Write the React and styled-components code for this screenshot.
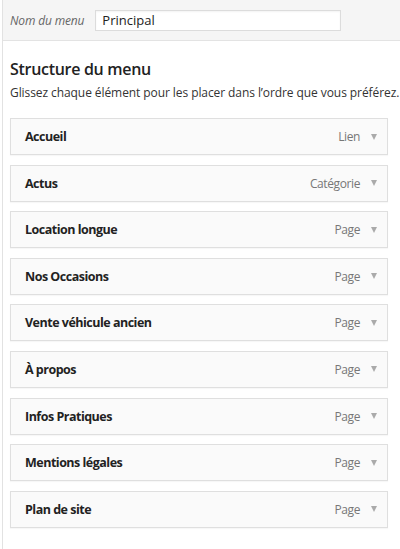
import React from "react";
import styled, { createGlobalStyle } from "styled-components";

const Global = createGlobalStyle`
  html, body { margin: 0; padding: 0; background: #fff; }
  body { font-family: "Open Sans", "Noto Sans", sans-serif; color: #222; }
`;

const Page = styled.div`
  margin-left: 2px;
  border-left: 1px solid #e2e2e2;
  min-height: 549px;
  background: #fff;
`;

const Header = styled.div`
  display: flex;
  align-items: center;
  height: 40px;
  background: #f5f5f5;
  border-bottom: 1px solid #e3e3e3;
  padding-left: 7px;
  gap: 11px;
`;

const Label = styled.label`
  font-style: italic;
  font-size: 12px;
  letter-spacing: -0.15px;
  color: #666;
`;

const NameInput = styled.div`
  width: 232px;
  height: 19px;
  border: 1px solid #dcdcdc;
  background: #fff;
  font-size: 13px;
  line-height: 19px;
  padding: 0 6px;
  color: #222;
  box-shadow: inset 0 1px 2px rgba(0,0,0,0.05);
`;

const Body = styled.div`
  padding: 16px 0 0 7px;
`;

const Title = styled.h3`
  margin: 0;
  font-size: 16px;
  letter-spacing: -0.3px;
  font-weight: 600;
  color: #222;
  line-height: 24px;
`;

const Desc = styled.p`
  margin: 3px 0 16px;
  font-size: 12px;
  letter-spacing: -0.08px;
  color: #333;
  white-space: nowrap;
  line-height: 18px;
`;

const List = styled.ul`
  list-style: none;
  margin: 0;
  padding: 0;
  display: flex;
  flex-direction: column;
  gap: 9.6px;
  width: 378px;
`;

const Item = styled.li`
  box-sizing: border-box;
  display: flex;
  align-items: center;
  height: 37px;
  border: 1px solid #dfdfdf;
  background: #fafafa;
  padding: 0 10px 0 14px;
  box-shadow: 0 1px 1px rgba(0,0,0,0.03);
`;

const ItemTitle = styled.span`
  flex: 1;
  font-size: 12.5px;
  letter-spacing: -0.5px;
  font-weight: 700;
  color: #222;
`;

const ItemType = styled.span`
  font-size: 12px;
  letter-spacing: -0.4px;
  color: #777;
`;

const Arrow = styled.span`
  width: 0;
  height: 0;
  margin-left: 11px;
  border-left: 3.5px solid transparent;
  border-right: 3.5px solid transparent;
  border-top: 6px solid #aaa;
`;

const items = [
  ["Accueil", "Lien"],
  ["Actus", "Catégorie"],
  ["Location longue", "Page"],
  ["Nos Occasions", "Page"],
  ["Vente véhicule ancien", "Page"],
  ["À propos", "Page"],
  ["Infos Pratiques", "Page"],
  ["Mentions légales", "Page"],
  ["Plan de site", "Page"],
];

export default function App() {
  return (
    <>
      <Global />
      <Page>
        <Header>
          <Label>Nom du menu</Label>
          <NameInput>Principal</NameInput>
        </Header>
        <Body>
          <Title>Structure du menu</Title>
          <Desc>Glissez chaque élément pour les placer dans l’ordre que vous préférez.</Desc>
          <List>
            {items.map(([t, k]) => (
              <Item key={t}>
                <ItemTitle>{t}</ItemTitle>
                <ItemType>{k}</ItemType>
                <Arrow />
              </Item>
            ))}
          </List>
        </Body>
      </Page>
    </>
  );
}
